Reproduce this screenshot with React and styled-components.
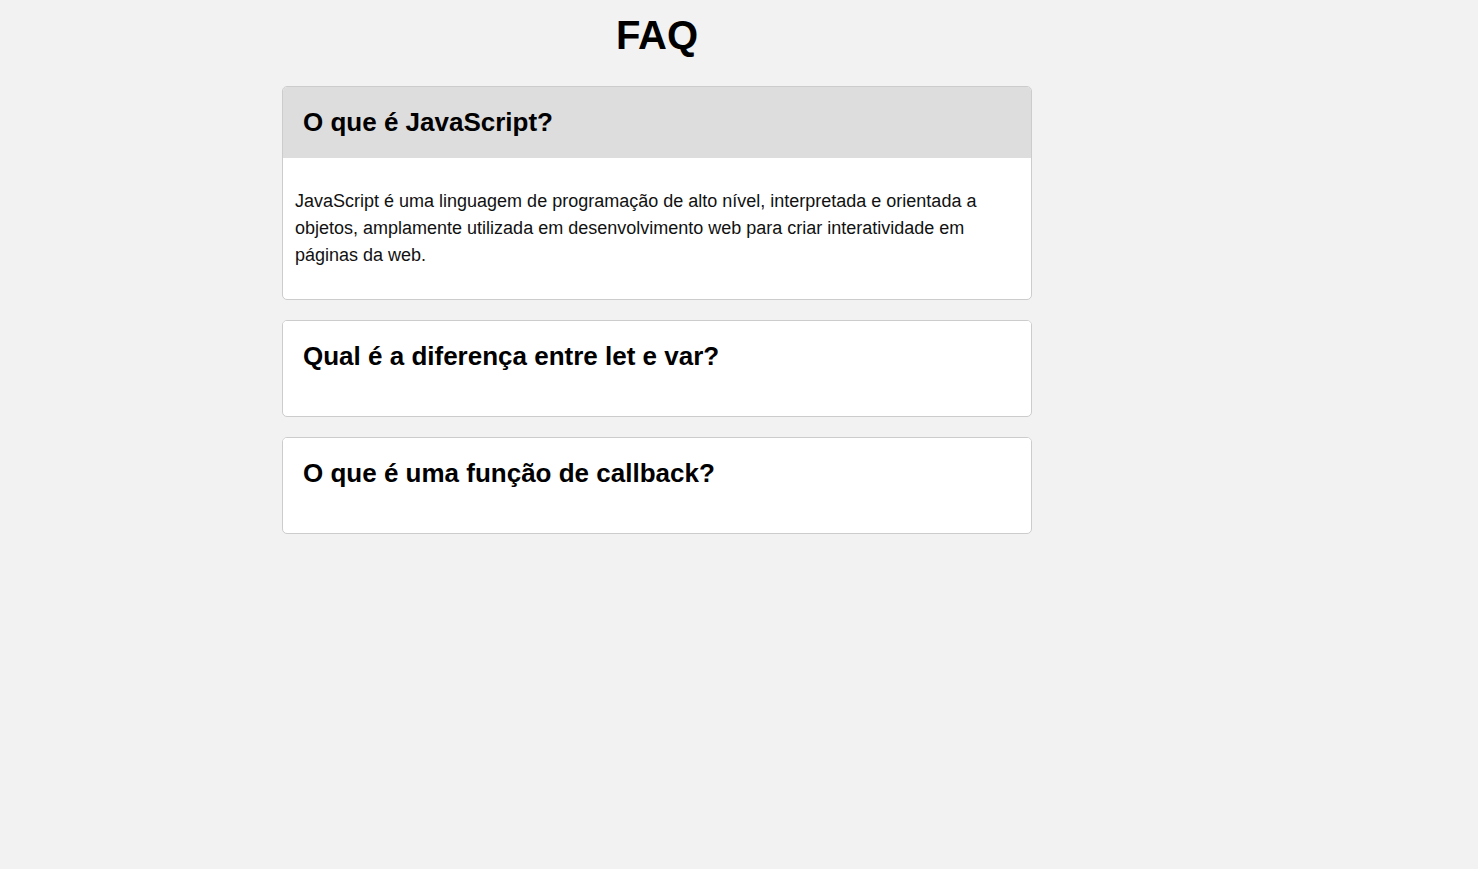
import React, { useState } from 'react';
import styled, { createGlobalStyle } from 'styled-components';

const perguntas = [
    {
        pergunta: 'O que é JavaScript?',
        resposta: 'JavaScript é uma linguagem de programação de alto nível, interpretada e orientada a objetos, amplamente utilizada em desenvolvimento web para criar interatividade em páginas da web.'
    },
    {
        pergunta: 'Qual é a diferença entre let e var?',
        resposta: 'let tem escopo de bloco, enquanto var tem escopo de função e sofre hoisting.'
    },
    {
        pergunta: 'O que é uma função de callback?',
        resposta: 'Uma função de callback é uma função passada como argumento para outra função, para ser executada depois.'
    }
];

export default function App() {
    const [aberta, setAberta] = useState(0);

    return (
        <>
            <GlobalStyle />
            <Page>
                <FaqContainer>
                    <Title>FAQ</Title>
                    {perguntas.map((item, index) => (
                        <Card key={index}>
                            <Question
                                $active={aberta === index}
                                onClick={() => setAberta(aberta === index ? null : index)}
                            >
                                {item.pergunta}
                            </Question>
                            <Answer>
                                {aberta === index && <AnswerText>{item.resposta}</AnswerText>}
                            </Answer>
                        </Card>
                    ))}
                </FaqContainer>
            </Page>
        </>
    );
}

const GlobalStyle = createGlobalStyle`
    body {
        margin: 0;
        background-color: #f2f2f2;
        font-family: "Liberation Sans", Arial, sans-serif;
    }
`;

const Page = styled.div`
    width: 1314px;
    min-height: 100vh;
`;

const FaqContainer = styled.div`
    width: 750px;
    margin: 0 auto;
    padding-top: 12px;
`;

const Title = styled.h1`
    margin: 0 0 28px;
    font-size: 40px;
    line-height: 46px;
    font-weight: bold;
    text-align: center;
    color: #000;
`;

const Card = styled.div`
    margin-bottom: 20px;
    background-color: #fff;
    border: 1px solid #ccc;
    border-radius: 5px;
    overflow: hidden;
`;

const Question = styled.h2`
    margin: 0;
    padding: 20px;
    font-size: 26px;
    line-height: 31px;
    font-weight: bold;
    color: #000;
    cursor: pointer;
    background-color: ${({ $active }) => ($active ? '#dddddd' : '#ffffff')};
`;

const Answer = styled.div`
    padding: 12px;
`;

const AnswerText = styled.p`
    margin: 18px 0;
    font-size: 18px;
    line-height: 27px;
    color: #111;
`;
